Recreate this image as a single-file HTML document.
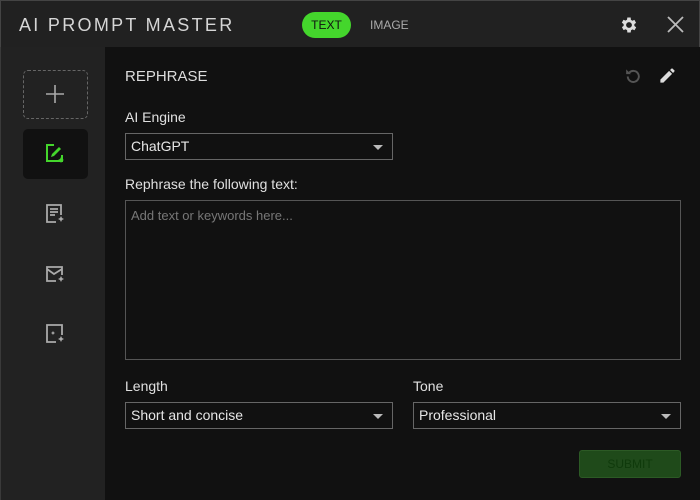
<!DOCTYPE html>
<html><head><style>
*{margin:0;padding:0;box-sizing:border-box}
body{width:700px;height:500px;background:#111;font-family:"Liberation Sans",sans-serif;position:relative;overflow:hidden;color:#ddd}
.hdr{position:absolute;left:0;top:0;width:700px;height:47px;background:#212121;border-top:1px solid #444;border-left:1px solid #444;border-right:1px solid #444;z-index:2}
.title{position:absolute;left:18px;top:14px;font-size:18px;letter-spacing:2.3px;color:#d6d6d6}
.pill{position:absolute;left:301px;top:11px;width:49px;height:26px;border-radius:13px;background:#44d62c;color:#111;font-size:12px;text-align:center;line-height:26px}
.img{position:absolute;left:369px;top:17px;font-size:12px;color:#aaa}
.side{position:absolute;left:0;top:0;width:105px;height:500px;background:#222;border-left:1px solid #3a3a3a}
.plus{position:absolute;left:22px;top:70px;width:65px;height:49px;border:1px dashed #666;border-radius:5px}
.act{position:absolute;left:22px;top:129px;width:65px;height:50px;background:#111;border-radius:5px}
.lbl{position:absolute;font-size:14px;color:#e0e0e0}
.sel{position:absolute;height:27px;border:1px solid #666;background:#111;font-size:14px;color:#e6e6e6;padding-left:5px;line-height:25px}
.sel:after{content:"";position:absolute;right:9px;top:11px;border-left:5px solid transparent;border-right:5px solid transparent;border-top:5px solid #bbb}
.ta{position:absolute;left:125px;top:200px;width:556px;height:160px;border:1px solid #555;font-size:13px;color:#777;padding:7px 5px}
.sub{position:absolute;left:579px;top:450px;width:102px;height:28px;background:#1f4a1a;border:1px solid #2c5a25;border-radius:3px;color:#0f3a0b;font-size:12px;text-align:center;line-height:26px}
</style></head><body>
<div class="hdr">
<div class="title">AI PROMPT MASTER</div>
<div class="pill">TEXT</div>
<div class="img">IMAGE</div>
<svg style="position:absolute;left:618px;top:14px" width="20" height="20" viewBox="0 0 24 24"><path fill="#ddd" d="M19.4 13a7.5 7.5 0 0 0 0-2l2.1-1.6-2-3.5-2.5 1a7 7 0 0 0-1.7-1L15 3h-4l-.4 2.7a7 7 0 0 0-1.7 1l-2.5-1-2 3.5L6.6 11a7.5 7.5 0 0 0 0 2l-2.1 1.6 2 3.5 2.5-1a7 7 0 0 0 1.7 1L11 21h4l.4-2.7a7 7 0 0 0 1.7-1l2.5 1 2-3.5zM13 15.5a3.5 3.5 0 1 1 0-7 3.5 3.5 0 0 1 0 7z" transform="translate(-1 0)"/></svg>
<svg style="position:absolute;left:666px;top:15px" width="17" height="17" viewBox="0 0 17 17"><path d="M1 1L16 16M16 1L1 16" stroke="#bbb" stroke-width="1.8"/></svg>
</div>
<div class="side">
<div class="plus"><svg style="position:absolute;left:21px;top:13px" width="20" height="20"><path d="M10 1v18M1 10h18" stroke="#aaa" stroke-width="1.6"/></svg></div>
<div class="act"><svg style="position:absolute;left:21px;top:14px" width="22" height="22" viewBox="0 0 22 22"><path d="M10 2H3v16h15v-6" fill="none" stroke="#44d62c" stroke-width="2"/><path d="M7 14l1-3 7-7 2 2-7 7z" fill="#44d62c"/><path d="M17 14l1 2 2 1-2 1-1 2-1-2-2-1 2-1z" fill="#44d62c"/></svg></div>
<svg style="position:absolute;left:43px;top:203px" width="22" height="22" viewBox="0 0 22 22"><path d="M12 19H3V2h14v10M6 6h8M6 9h8M6 12h5" fill="none" stroke="#aaa" stroke-width="1.8"/><path d="M17 13l1 2 2 1-2 1-1 2-1-2-2-1 2-1z" fill="#aaa"/></svg>
<svg style="position:absolute;left:43px;top:263px" width="22" height="22" viewBox="0 0 22 22"><path d="M12 18H3V4h15v8M3 6l7 5 8-5" fill="none" stroke="#aaa" stroke-width="1.8"/><path d="M17 13l1 2 2 1-2 1-1 2-1-2-2-1 2-1z" fill="#aaa"/></svg>
<svg style="position:absolute;left:43px;top:323px" width="22" height="22" viewBox="0 0 22 22"><path d="M12 19H3V2h15v10" fill="none" stroke="#aaa" stroke-width="1.8"/><path d="M9 8l.7 1.3L11 10l-1.3.7L9 12l-.7-1.3L7 10l1.3-.7zM17 13l1 2 2 1-2 1-1 2-1-2-2-1 2-1z" fill="#aaa"/></svg>
</div>
<div class="lbl" style="left:125px;top:68px;font-size:15px;color:#ddd">REPHRASE</div>
<svg style="position:absolute;left:623px;top:67px" width="19" height="19" viewBox="0 0 24 24"><path d="M6 12a7 7 0 1 0 2-5" fill="none" stroke="#555" stroke-width="2.4"/><path d="M4 3v6h6z" fill="#555"/></svg>
<svg style="position:absolute;left:658px;top:66px" width="19" height="19" viewBox="0 0 24 24"><path d="M3 17.2V21h3.8L17.8 10l-3.8-3.8zM20.7 7a1 1 0 0 0 0-1.4l-2.3-2.3a1 1 0 0 0-1.4 0l-1.8 1.8 3.8 3.8z" fill="#ddd"/></svg>
<div class="lbl" style="left:125px;top:109px">AI Engine</div>
<div class="sel" style="left:125px;top:133px;width:268px">ChatGPT</div>
<div class="lbl" style="left:125px;top:176px">Rephrase the following text:</div>
<div class="ta">Add text or keywords here...</div>
<div class="lbl" style="left:125px;top:378px">Length</div>
<div class="lbl" style="left:413px;top:378px">Tone</div>
<div class="sel" style="left:125px;top:402px;width:268px">Short and concise</div>
<div class="sel" style="left:413px;top:402px;width:268px">Professional</div>
<div class="sub">SUBMIT</div>
</body></html>
